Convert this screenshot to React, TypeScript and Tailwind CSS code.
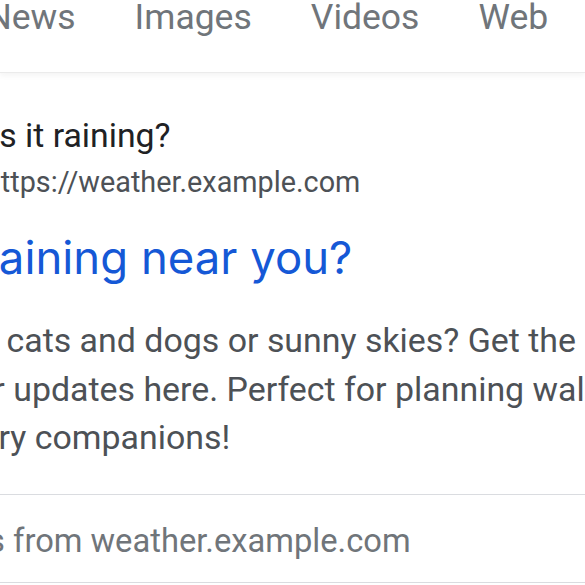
import React from "react";

const tabs = ["All", "News", "Images", "Videos", "Web", "Maps"];

export default function App() {
  return (
    <div className="w-[585px] h-[585px] overflow-hidden bg-white font-['Roboto',sans-serif]">
      {/* tabs */}
      <nav className="h-[73px] border-b border-[#ebebeb] shadow-[0_2px_6px_rgba(32,33,36,0.06)]">
        <div className="flex gap-[59px] -ml-[113px] whitespace-nowrap text-[35.5px] leading-none text-[#70757a]">
          {tabs.map((t) => (
            <span key={t}>{t}</span>
          ))}
        </div>
      </nav>

      {/* result */}
      <section className="pt-[43px] whitespace-nowrap">
        <div className="-ml-[10px] text-[33.8px] leading-[40px] text-[#202124]">Is it raining?</div>
        <div className="-ml-[15px] mt-2 text-[28.8px] leading-[36px] text-[#4d5156]">https://weather.example.com</div>
        <h3 className="-ml-[106px] mt-[30px] font-['Inter',sans-serif] text-[45.5px] leading-[56px] text-[#1558d6]">
          Is it raining near you?
        </h3>
        <div className="mt-[31px] text-[33.9px] leading-[48.5px] text-[#4d5156]">
          <div className="-ml-[167px]">Is it raining cats and dogs or sunny skies? Get the latest</div>
          <div className="-ml-[209px]">latest weather updates here. Perfect for planning walks with</div>
          <div className="-ml-[189px]">with your furry companions!</div>
        </div>
      </section>

      {/* more results */}
      <div className="mt-[31px] border-y border-[#dadce0] pt-[26px] pb-[21px] whitespace-nowrap">
        <div className="-ml-[177px] text-[32.7px] leading-[40px] text-[#70757a]">More results from weather.example.com</div>
      </div>
    </div>
  );
}
